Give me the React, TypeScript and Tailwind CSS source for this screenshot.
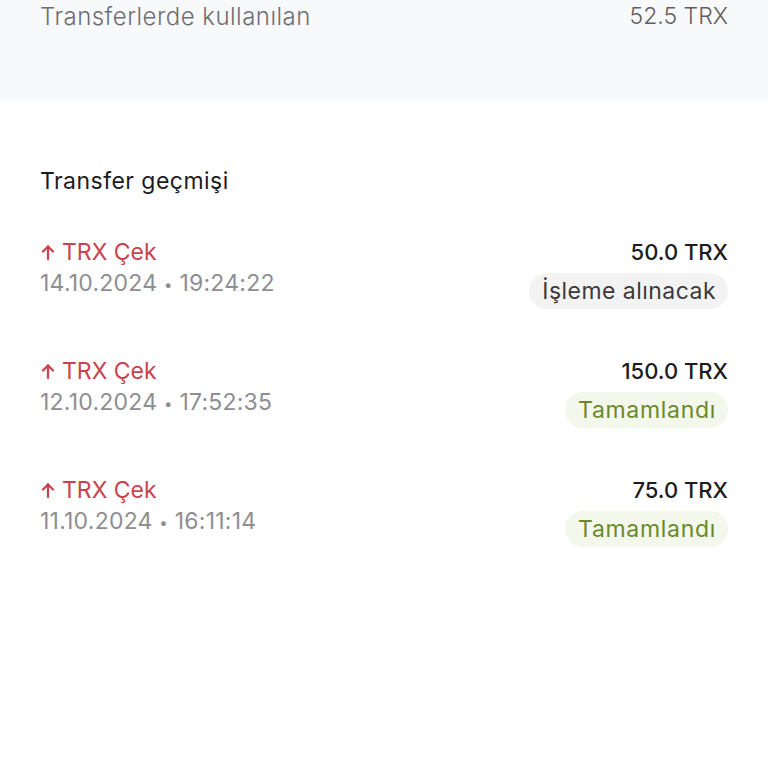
import React from 'react';

type Transfer = {
    date: string;
    time: string;
    amount: string;
    status: 'pending' | 'done';
};

const transfers: Transfer[] = [
    { date: '14.10.2024', time: '19:24:22', amount: '50.0 TRX', status: 'pending' },
    { date: '12.10.2024', time: '17:52:35', amount: '150.0 TRX', status: 'done' },
    { date: '11.10.2024', time: '16:11:14', amount: '75.0 TRX', status: 'done' },
];

const ArrowUp = () => (
    <svg width="16" height="17" viewBox="0 0 16 17" fill="none" stroke="currentColor" strokeWidth="2.3" strokeLinecap="round" strokeLinejoin="round">
        <path d="M8 15V2.5" />
        <path d="M3 7.5L8 2.5L13 7.5" />
    </svg>
);

const App: React.FC = () => {
    return (
        <div className="min-h-[768px] bg-white font-['Inter','Liberation_Sans',sans-serif] text-[23px]">
            {/* summary panel */}
            <div className="h-[101px] bg-[#f8f9fb] px-10">
                <div className="flex justify-between items-center leading-[31px] pt-[1px]">
                    <span className="text-[24px] font-light tracking-[0.02em] text-[#6e6e72]">Transferlerde kullanılan</span>
                    <span className="font-light text-[#5f5f63]">52.5 TRX</span>
                </div>
            </div>

            <div className="px-10 pt-[65px]">
                <h2 className="text-[#1c1c1e] font-normal leading-[31px] tracking-[0.02em]">Transfer geçmişi</h2>

                <div className="mt-[40px] flex flex-col gap-[47px]">
                    {transfers.map((t) => (
                        <div key={t.date} className="flex justify-between items-start">
                            <div className="flex flex-col">
                                <div className="flex items-center gap-[6px] text-[#c9434f] leading-[31px]">
                                    <ArrowUp />
                                    <span>TRX Çek</span>
                                </div>
                                <div className="text-[#8e8e93] leading-[31px] tracking-[0.01em]">
                                    {t.date} <span className="text-[15px] align-middle">•</span> {t.time}
                                </div>
                            </div>
                            <div className="flex flex-col items-end gap-[5px]">
                                <span className="text-[22px] text-[#1c1c1e] font-medium leading-[31px]">{t.amount}</span>
                                <span
                                    className={
                                        t.status === 'pending'
                                            ? 'rounded-full bg-[#f3f3f4] text-[#3a3a3c] pl-[13px] pr-3 h-9 flex items-center tracking-[0.02em]'
                                            : 'rounded-full bg-[#f4f7eb] text-[#6a8a2a] pl-[13px] pr-3 h-9 flex items-center tracking-[0.03em]'
                                    }
                                >
                                    {t.status === 'pending' ? 'İşleme alınacak' : 'Tamamlandı'}
                                </span>
                            </div>
                        </div>
                    ))}
                </div>
            </div>
        </div>
    );
};

export default App;
